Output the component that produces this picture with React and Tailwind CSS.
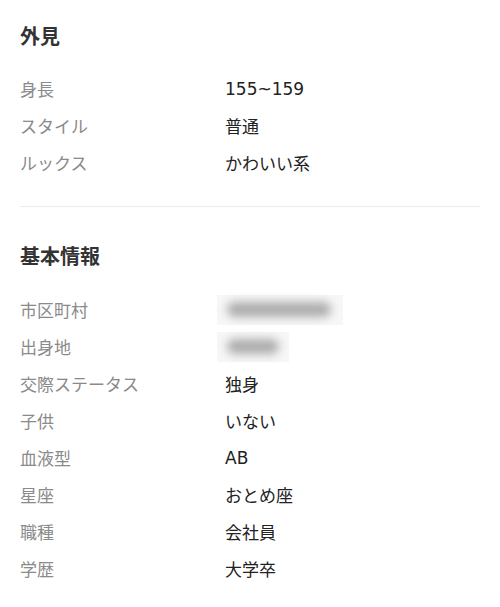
export default function App() {
  const font = { fontFamily: '"Noto Sans CJK JP", "Noto Sans", sans-serif' };
  const Row = ({ label, value, latin, blur }) => (
    <div className="flex items-center h-[37px]">
      <div className="w-[205px] shrink-0 text-[17px] text-[#8a8a8a]">{label}</div>
      <div className="text-[17px] text-[#222]">
        {blur ? (
          <div className={`${blur === 1 ? "w-[126px]" : "w-[72px]"} h-[30px] bg-[#f7f7f7] -ml-[8px] flex items-center px-[10px]`}>
            <div className={`${blur === 1 ? "w-[104px]" : "w-[54px]"} h-[15px] rounded-full bg-[#acacac] blur-[5px]`} />
          </div>
        ) : latin ? (
          <span style={{ fontFamily: '"DejaVu Sans", sans-serif' }}>{value}</span>
        ) : (
          value
        )}
      </div>
    </div>
  );
  return (
    <div className="w-[500px] bg-white px-[20px] pt-[22px]" style={font}>
      <div className="text-[20px] leading-[28px] font-bold text-[#333]">外見</div>
      <div className="mt-[20px]">
        <Row label="身長" value="155~159" latin />
        <Row label="スタイル" value="普通" />
        <Row label="ルックス" value="かわいい系" />
      </div>
      <div className="mt-[25px] border-t border-[#ececec]" />
      <div className="mt-[35px] text-[20px] leading-[28px] font-bold text-[#333]">基本情報</div>
      <div className="mt-[21px]">
        <Row label="市区町村" blur={1} />
        <Row label="出身地" blur={2} />
        <Row label="交際ステータス" value="独身" />
        <Row label="子供" value="いない" />
        <Row label="血液型" value="AB" latin />
        <Row label="星座" value="おとめ座" />
        <Row label="職種" value="会社員" />
        <Row label="学歴" value="大学卒" />
      </div>
    </div>
  );
}
